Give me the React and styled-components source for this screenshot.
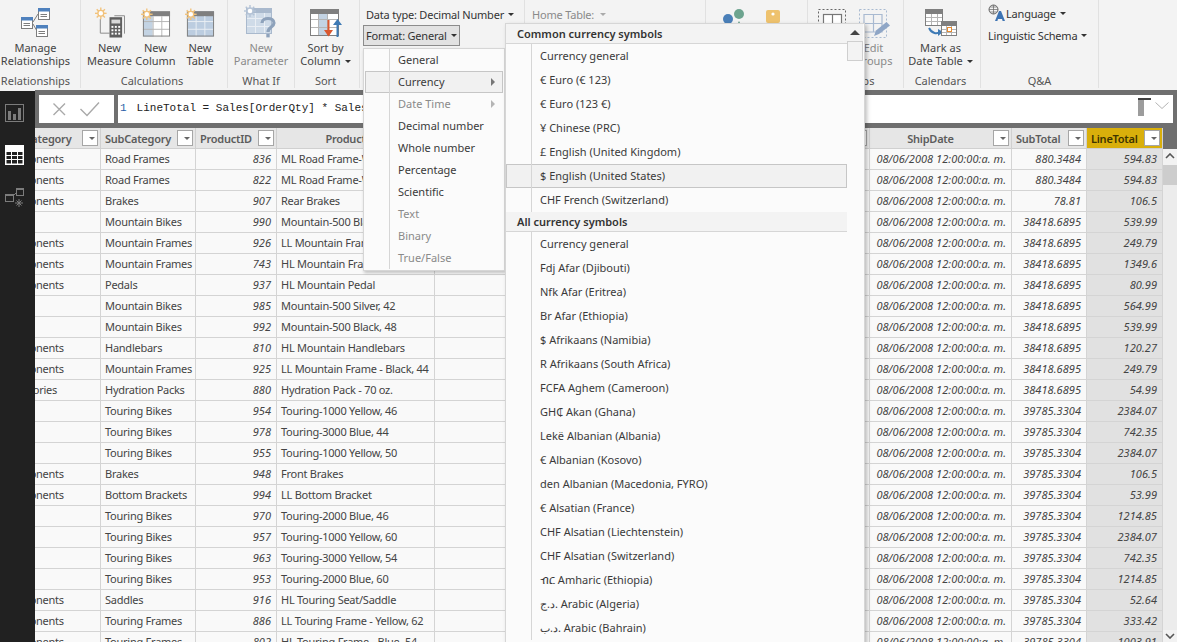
import styled, { createGlobalStyle } from 'styled-components';

const GlobalStyle = createGlobalStyle`
  html, body {
    margin: 0;
    height: 100%;
    overflow: hidden;
    background: #f3f3f3;
    font-family: "Noto Sans", "Open Sans", sans-serif;
    font-size: 11px;
    color: #333;
  }
  * { box-sizing: border-box; }
`;

const rows = [
  ['Components', 'Road Frames', 836, 'ML Road Frame-W Yellow, 48', '880.3484', '594.83'],
  ['Components', 'Road Frames', 822, 'ML Road Frame-W Yellow, 38', '880.3484', '594.83'],
  ['Components', 'Brakes', 907, 'Rear Brakes', '78.81', '106.5'],
  ['Bikes', 'Mountain Bikes', 990, 'Mountain-500 Black, 42', '38418.6895', '539.99'],
  ['Components', 'Mountain Frames', 926, 'LL Mountain Frame - Black, 42', '38418.6895', '249.79'],
  ['Components', 'Mountain Frames', 743, 'HL Mountain Frame - Black, 42', '38418.6895', '1349.6'],
  ['Components', 'Pedals', 937, 'HL Mountain Pedal', '38418.6895', '80.99'],
  ['Bikes', 'Mountain Bikes', 985, 'Mountain-500 Silver, 42', '38418.6895', '564.99'],
  ['Bikes', 'Mountain Bikes', 992, 'Mountain-500 Black, 48', '38418.6895', '539.99'],
  ['Components', 'Handlebars', 810, 'HL Mountain Handlebars', '38418.6895', '120.27'],
  ['Components', 'Mountain Frames', 925, 'LL Mountain Frame - Black, 44', '38418.6895', '249.79'],
  ['Accessories', 'Hydration Packs', 880, 'Hydration Pack - 70 oz.', '38418.6895', '54.99'],
  ['Bikes', 'Touring Bikes', 954, 'Touring-1000 Yellow, 46', '39785.3304', '2384.07'],
  ['Bikes', 'Touring Bikes', 978, 'Touring-3000 Blue, 44', '39785.3304', '742.35'],
  ['Bikes', 'Touring Bikes', 955, 'Touring-1000 Yellow, 50', '39785.3304', '2384.07'],
  ['Components', 'Brakes', 948, 'Front Brakes', '39785.3304', '106.5'],
  ['Components', 'Bottom Brackets', 994, 'LL Bottom Bracket', '39785.3304', '53.99'],
  ['Bikes', 'Touring Bikes', 970, 'Touring-2000 Blue, 46', '39785.3304', '1214.85'],
  ['Bikes', 'Touring Bikes', 957, 'Touring-1000 Yellow, 60', '39785.3304', '2384.07'],
  ['Bikes', 'Touring Bikes', 963, 'Touring-3000 Yellow, 54', '39785.3304', '742.35'],
  ['Bikes', 'Touring Bikes', 953, 'Touring-2000 Blue, 60', '39785.3304', '1214.85'],
  ['Components', 'Saddles', 916, 'HL Touring Seat/Saddle', '39785.3304', '52.64'],
  ['Components', 'Touring Frames', 886, 'LL Touring Frame - Yellow, 62', '39785.3304', '333.42'],
  ['Components', 'Touring Frames', 802, 'HL Touring Frame - Blue, 54', '39785.3304', '1003.91'],
];

const formatItems = [
  { label: 'General' },
  { label: 'Currency', active: true, more: true },
  { label: 'Date Time', off: true, more: true },
  { label: 'Decimal number' },
  { label: 'Whole number' },
  { label: 'Percentage' },
  { label: 'Scientific' },
  { label: 'Text', off: true },
  { label: 'Binary', off: true },
  { label: 'True/False', off: true },
];

const commonCurrency = [
  'Currency general',
  '€ Euro (€ 123)',
  '€ Euro (123 €)',
  '¥ Chinese (PRC)',
  '£ English (United Kingdom)',
  '$ English (United States)',
  'CHF French (Switzerland)',
];

const allCurrency = [
  'Currency general',
  'Fdj Afar (Djibouti)',
  'Nfk Afar (Eritrea)',
  'Br Afar (Ethiopia)',
  '$ Afrikaans (Namibia)',
  'R Afrikaans (South Africa)',
  'FCFA Aghem (Cameroon)',
  'GH₵ Akan (Ghana)',
  'Lekë Albanian (Albania)',
  '€ Albanian (Kosovo)',
  'den Albanian (Macedonia, FYRO)',
  '€ Alsatian (France)',
  'CHF Alsatian (Liechtenstein)',
  'CHF Alsatian (Switzerland)',
  'ብር Amharic (Ethiopia)',
  'د.ج. Arabic (Algeria)',
  'د.ب. Arabic (Bahrain)',
];

// column widths, first one starts behind the left nav
const columns = '105px 95px 81px 158px 220px 215px 142px 75px 76px';

const Page = styled.div`
  position: relative;
  width: 1177px;
  height: 642px;
  overflow: hidden;
`;

const Ribbon = styled.div`
  display: flex;
  height: 90px;
  background: #f3f3f3;
`;

const Group = styled.div`
  display: flex;
  flex-direction: column;
  flex: none;
  width: ${(p) => p.$w}px;
  height: 88px;
  border-right: 1px solid #e1e1e1;
`;

const GroupBody = styled.div`
  display: flex;
  flex: 1;
  justify-content: center;
  padding-right: ${(p) => p.$pr || 0}px;
  padding-top: 4px;
`;

const GroupLabel = styled.div`
  height: 14px;
  line-height: 13px;
  text-align: center;
  color: #555;
  padding-right: ${(p) => p.$pr || 0}px;
`;

const Button = styled.div`
  display: flex;
  flex-direction: column;
  align-items: center;
  flex: none;
  width: ${(p) => p.$w}px;
  line-height: 13px;
  text-align: center;
  color: ${(p) => (p.$off ? '#8a8a8a' : '#444')};
  white-space: nowrap;
`;

const IconSlot = styled.div`
  display: flex;
  align-items: center;
  justify-content: center;
  height: 37px;
`;

const Caret = styled.span`
  display: inline-block;
  width: 0;
  height: 0;
  margin-left: ${(p) => p.$ml || 4}px;
  vertical-align: 2px;
  border-left: 3px solid transparent;
  border-right: 3px solid transparent;
  border-top: 3px solid ${(p) => p.$color || '#333'};
`;

const Stack = styled.div`
  display: flex;
  flex-direction: column;
  flex: 1;
  padding: 0 0 0 ${(p) => p.$pl || 0}px;
`;

const InlineRow = styled.div`
  display: flex;
  align-items: center;
  height: 22px;
  padding-left: ${(p) => p.$pl || 0}px;
  margin-top: ${(p) => p.$mt || 0}px;
  color: ${(p) => (p.$off ? '#8a8a8a' : '#333')};
  letter-spacing: -0.2px;
  white-space: nowrap;
`;

const FormatButton = styled.div`
  display: flex;
  align-items: center;
  width: 97px;
  height: 21px;
  margin-left: 3px;
  padding-left: 2px;
  background: #e2e2e2;
  border: 1px solid #8c8c8c;
  letter-spacing: -0.2px;
  white-space: nowrap;
`;

const Main = styled.div`
  display: flex;
  height: 552px;
`;

const Nav = styled.div`
  display: flex;
  flex-direction: column;
  align-items: flex-start;
  flex: none;
  width: 35px;
  margin-top: 1px;
  padding: 13px 0 0 5px;
  gap: 23px;
  background: #212121;
`;

const Content = styled.div`
  display: flex;
  flex-direction: column;
  flex: 1;
  min-width: 0;
  background: #6f6f6f;
`;

const FormulaStrip = styled.div`
  display: flex;
  flex: none;
  gap: 4px;
  height: 38px;
  padding: 5px 4px 5px 4px;
`;

const FormulaActions = styled.div`
  display: flex;
  align-items: center;
  justify-content: center;
  flex: none;
  width: 75px;
  background: #fff;
`;

const FormulaBox = styled.div`
  display: flex;
  align-items: center;
  flex: 1;
  padding: 0 2px 2px 2px;
  background: #fff;
  font-family: "Liberation Mono", monospace;
  font-size: 11px;
  color: #222;
  white-space: pre;
`;

const LineNo = styled.span`
  color: #2b5fa8;
`;

const FormulaText = styled.span`
  flex: 1;
  margin-left: 10px;
`;

const TableArea = styled.div`
  display: flex;
  flex: 1;
  min-height: 0;
`;

const TableClip = styled.div`
  flex: none;
  width: 1128px;
  overflow: hidden;
`;

const Grid = styled.div`
  width: 1167px;
  margin-left: -39px;
  background: #f9f9f9;
`;

const HeadRow = styled.div`
  display: grid;
  grid-template-columns: ${columns};
  height: 21px;
`;

const HeadCell = styled.div`
  display: flex;
  align-items: center;
  padding: 0 2px 0 4px;
  background: ${(p) => (p.$hot ? '#d9af0b' : '#e6e6e6')};
  border-right: 1px solid #d0d0d0;
  border-bottom: 1px solid #d0d0d0;
  color: ${(p) => (p.$hot ? '#3d3300' : '#5c5c5c')};
  font-weight: 600;
  letter-spacing: -0.25px;
  white-space: nowrap;
`;

const HeadLabel = styled.span`
  flex: 1;
  text-align: ${(p) => (p.$center ? 'center' : 'left')};
  padding-left: ${(p) => p.$pl || 0}px;
  padding-right: ${(p) => (p.$center ? 6 : 0)}px;
`;

const FilterButton = styled.span`
  display: flex;
  align-items: center;
  justify-content: center;
  flex: none;
  width: 16px;
  height: 16px;
  background: #fff;
  border: 1px solid #a6a6a6;
`;

const BodyRow = styled.div`
  display: grid;
  grid-template-columns: ${columns};
  height: 21px;
`;

const Cell = styled.div`
  padding: 0 5px 0 4px;
  line-height: 20px;
  overflow: hidden;
  white-space: nowrap;
  background: ${(p) => (p.$hot ? '#e1e1e1' : '#f9f9f9')};
  border-right: 1px solid #d4d4d4;
  border-bottom: 1px solid #d4d4d4;
  text-align: ${(p) => (p.$num ? 'right' : 'left')};
  font-style: ${(p) => (p.$num ? 'italic' : 'normal')};
  letter-spacing: ${(p) => (p.$num ? '0.05px' : '-0.25px')};
  color: #444;
`;

const ScrollTrack = styled.div`
  display: flex;
  flex-direction: column;
  align-items: center;
  flex: 1;
  margin-top: 21px;
  background: #ececec;
`;

const ScrollArrow = styled.div`
  display: flex;
  align-items: ${(p) => (p.$down ? 'center' : 'flex-start')};
  justify-content: center;
  flex: none;
  width: 100%;
  height: ${(p) => p.$h}px;
  padding-top: ${(p) => (p.$down ? 0 : 4)}px;
  background: #f2f2f2;
`;

const ScrollThumb = styled.div`
  flex: none;
  width: 100%;
  height: 20px;
  background: #cdcdcd;
`;

const ScrollRest = styled.div`
  flex: 1;
`;

// the two open dropdowns lie over the ribbon and the table
const FormatMenu = styled.div`
  position: absolute;
  left: 363px;
  top: 48px;
  width: 142px;
  height: 223px;
  padding: 0 1px;
  background: #fbfbfb;
  border: 1px solid #d6d6d6;
  box-shadow: 1px 2px 3px rgba(0, 0, 0, 0.22);
`;

const CurrencyMenu = styled.div`
  position: absolute;
  left: 505px;
  top: 23px;
  display: flex;
  width: 360px;
  height: 640px;
  background: #fbfbfb;
  border: 1px solid #d6d6d6;
  box-shadow: 2px 2px 4px rgba(0, 0, 0, 0.25);
`;

const CurrencyList = styled.div`
  flex: 1;
  min-width: 0;
`;

const MenuHead = styled.div`
  height: 20px;
  line-height: 19px;
  padding-left: 11px;
  background: #f3f3f3;
  border-bottom: 1px solid #d6d6d6;
  font-weight: 600;
  color: #333;
`;

const MenuRow = styled.div`
  display: flex;
  height: ${(p) => p.$h}px;
  background: ${(p) => (p.$active ? '#f1f1f1' : 'transparent')};
  box-shadow: ${(p) => (p.$active ? 'inset 0 0 0 1px #c6c6c6' : 'none')};
  color: ${(p) => (p.$off ? '#8a8a8a' : '#3a3a3a')};
`;

const MenuGutter = styled.div`
  flex: none;
  width: ${(p) => p.$w}px;
  border-right: 1px solid #d6d6d6;
`;

const MenuLabel = styled.div`
  flex: 1;
  line-height: ${(p) => p.$h}px;
  padding-left: 8px;
  white-space: nowrap;
`;

const MenuArrow = styled.div`
  align-self: center;
  width: 0;
  height: 0;
  margin-right: 8px;
  border-top: 4px solid transparent;
  border-bottom: 4px solid transparent;
  border-left: 4px solid ${(p) => (p.$off ? '#b5b5b5' : '#777')};
`;

const MenuScroll = styled.div`
  display: flex;
  flex-direction: column;
  flex: none;
  width: 16px;
  margin-right: 1px;
`;

const MenuScrollTop = styled.div`
  display: flex;
  align-items: center;
  justify-content: center;
  height: 17px;
  background: #f3f3f3;
`;

const MenuThumb = styled.div`
  height: 20px;
  background: #f3f3f3;
  border: 1px solid #cfcfcf;
`;

function Sun({ x, y, color = '#f2c27a' }) {
  const rays = [0, 45, 90, 135];
  return (
    <g stroke={color} strokeWidth="1.4">
      {rays.map((a) => (
        <line key={a} x1={x - 6} y1={y} x2={x + 6} y2={y} transform={`rotate(${a} ${x} ${y})`} />
      ))}
      <circle cx={x} cy={y} r="3" fill="#fff" />
    </g>
  );
}

function MiniTable({ x, y, w, h }) {
  return (
    <g>
      <rect x={x + 0.5} y={y + 0.5} width={w} height={h} fill="#fff" stroke="#7d7d7d" />
      <rect x={x} y={y} width={w + 1} height={3.5} fill="#4f81bd" />
      <line x1={x + 2.5} y1={y + 6.5} x2={x + w - 2} y2={y + 6.5} stroke="#7d7d7d" />
      <line x1={x + 2.5} y1={y + 8.5} x2={x + w - 2} y2={y + 8.5} stroke="#7d7d7d" />
    </g>
  );
}

function RelationshipsIcon() {
  return (
    <svg width="30" height="31" viewBox="22 6 30 31">
      <path d="M34 21 L39 13 M34 23 L38 30" stroke="#7d7d7d" fill="none" />
      <MiniTable x={39} y={7} w={11} h={11} />
      <MiniTable x={22} y={16} w={11} h={11} />
      <MiniTable x={37} y={24} w={11} h={11} />
    </svg>
  );
}

function MeasureIcon() {
  const keys = [25, 28.5, 32];
  return (
    <svg width="30" height="32" viewBox="92 6 31 32">
      <path d="M112 14.5 H122.5 V33 M97.5 18 V32.5 H107" stroke="#8a8a8a" fill="none" />
      <rect x="107" y="16" width="13" height="21" fill="#5f5f5f" />
      <rect x="109" y="18.5" width="9" height="4" fill="#d9d9d9" />
      {keys.map((ky) =>
        [109, 112.5, 116].map((kx) => (
          <rect key={`${kx}-${ky}`} x={kx} y={ky} width="2" height="2" fill="#fff" />
        )),
      )}
      <Sun x={98} y={12} />
    </svg>
  );
}

function TableGlyph({ x, y, w, h, cols, rowsAt, fill, blueCol, head = '#7f7f7f', line = '#b5b5b5' }) {
  return (
    <g>
      <rect x={x} y={y} width={w} height={h} fill={fill} />
      {blueCol && <rect x={blueCol[0]} y={y} width={blueCol[1]} height={h} fill="#c3d3e3" />}
      <rect x={x} y={y} width={w} height={5} fill={head} />
      {cols.map((c) => (
        <line key={c} x1={c} y1={y + 5} x2={c} y2={y + h} stroke={line} />
      ))}
      {rowsAt.map((r) => (
        <line key={r} x1={x} y1={r} x2={x + w} y2={r} stroke={line} />
      ))}
      <rect x={x + 0.5} y={y + 0.5} width={w - 1} height={h - 1} fill="none" stroke={head} />
    </g>
  );
}

function ColumnIcon() {
  return (
    <svg width="30" height="30" viewBox="140 6 31 30">
      <TableGlyph x={142} y={9} w={28} h={26} cols={[152.5, 161.5]} rowsAt={[19.5, 27.5]} fill="#fff" blueCol={[142, 10]} />
      <Sun x={146} y={12} />
    </svg>
  );
}

function NewTableIcon() {
  return (
    <svg width="30" height="30" viewBox="184 6 31 30">
      <TableGlyph x={186} y={9} w={28} h={26} cols={[195.5, 204.5]} rowsAt={[19.5, 27.5]} fill="#bccde0" line="#e9eef4" />
      <Sun x={190} y={12} />
    </svg>
  );
}

function ParameterIcon() {
  return (
    <svg width="34" height="36" viewBox="243 6 34 36">
      <TableGlyph x={245} y={9} w={26} h={26} cols={[254.5, 263.5]} rowsAt={[19.5, 27.5]} fill="#cfdbe8" head="#a9b9cd" line="#e9eef4" />
      <Sun x={249} y={12} color="#b4c3d6" />
      <path d="M261 24 C261 18 273 18 273 24 C273 28 267 28 267 33" stroke="#8ea2bb" strokeWidth="3.2" fill="none" />
      <rect x="265.3" y="35" width="3.4" height="3.4" fill="#8ea2bb" />
    </svg>
  );
}

function SortIcon() {
  return (
    <svg width="34" height="30" viewBox="309 9 34 30">
      <TableGlyph x={310} y={10} w={29} h={27} cols={[318.5, 327.5]} rowsAt={[20.5, 28.5]} fill="#fff" blueCol={[318, 9]} />
      <path d="M328.5 21 V36" stroke="#d9572f" strokeWidth="2" />
      <path d="M324 31 L328.5 37.5 L333 31 Z" fill="#d9572f" />
      <path d="M337.5 38 V24" stroke="#3e7ab5" strokeWidth="2" />
      <path d="M333 26 L337.5 20 L342 26 Z" fill="#3e7ab5" />
    </svg>
  );
}

function RolesIcon() {
  return (
    <svg width="34" height="30" viewBox="719 6 34 30">
      <circle cx="737" cy="12" r="5" fill="#6da48f" />
      <path d="M730 32 L737 19 L744 32 Z" fill="#6da48f" />
      <circle cx="726" cy="17" r="5" fill="#4a7fb8" />
      <path d="M720 34 L726 24 L732 34 Z" fill="#4a7fb8" />
    </svg>
  );
}

function KeyIcon() {
  return (
    <svg width="22" height="30" viewBox="768 6 22 30">
      <rect x="770" y="8" width="14" height="13" rx="2" fill="#eec26e" />
      <circle cx="777" cy="12" r="1.6" fill="#fff" />
      <rect x="774" y="20" width="4" height="12" fill="#eec26e" />
      <circle cx="784" cy="26" r="5" fill="#7a7a7a" />
    </svg>
  );
}

function NewGroupIcon() {
  return (
    <svg width="30" height="30" viewBox="817 6 30 30">
      <rect x="818.5" y="7.5" width="27" height="27" fill="none" stroke="#666" strokeDasharray="2 2" />
      <rect x="823.5" y="12.5" width="18" height="10" fill="#fff" stroke="#777" strokeWidth="1.2" />
      <line x1="832.5" y1="12" x2="832.5" y2="23" stroke="#777" strokeWidth="1.2" />
    </svg>
  );
}

function EditGroupIcon() {
  return (
    <svg width="32" height="30" viewBox="859 6 32 30">
      <rect x="860.5" y="7.5" width="27" height="28" fill="none" stroke="#a9bad1" strokeDasharray="2 2" />
      <path d="M865 12.5 H883 V30 H865 Z M874.5 12.5 V30 M865 21.5 H883" fill="none" stroke="#a9bad1" strokeWidth="1.2" />
      <path d="M875 34 L877 28.5 L887.5 20 L891 23.5 L880 32 Z" fill="#8fa6c6" />
    </svg>
  );
}

function DateTableIcon() {
  return (
    <svg width="34" height="30" viewBox="924 7 34 30">
      <TableGlyph x={925} y={8} w={18} h={17} cols={[931.5, 937.5]} rowsAt={[16.5, 20.5]} fill="#fff" />
      <path d="M929 27 C932 33 937 33 940 31" stroke="#3e7ab5" strokeWidth="2" fill="none" />
      <path d="M938 28 L943 31 L938 35 Z" fill="#3e7ab5" />
      <TableGlyph x={941} y={20} w={16} h={15} cols={[946.5, 951.5]} rowsAt={[28.5, 31.5]} fill="#fff" />
      <rect x="947.5" y="26.5" width="4" height="4" fill="#fff" stroke="#e58a2f" />
    </svg>
  );
}

function LanguageIcon() {
  return (
    <svg width="18" height="18" viewBox="988 5 18 18">
      <circle cx="993.5" cy="10.5" r="4.5" fill="none" stroke="#666" />
      <path d="M989 10.5 H998 M993.5 6 V15 M990 8 H997 M990 13 H997" stroke="#666" strokeWidth="0.7" />
      <path d="M995 22 L999 12 H1001 L1005 22 H1002.6 L1002 20 H998 L997.4 22 Z" fill="#3e74b3" />
    </svg>
  );
}

function CrossCheck() {
  return (
    <svg width="75" height="28" viewBox="39 95 75 28">
      <path d="M53.5 103.5 L65 115 M65 103.5 L53.5 115" stroke="#a9a9a9" strokeWidth="1.4" fill="none" />
      <path d="M80.5 109 L87 115.5 L99 102.5" stroke="#a9a9a9" strokeWidth="1.4" fill="none" />
    </svg>
  );
}

function FormulaTools() {
  return (
    <svg width="33" height="27" viewBox="1139 95 33 27">
      <rect x="1139" y="98" width="13" height="2" fill="#404040" />
      <rect x="1139" y="100" width="6" height="16" fill="#9c9c9c" />
      <path d="M1156.5 102.5 L1163 108.5 L1169.5 102.5" stroke="#b4b4b4" fill="none" />
    </svg>
  );
}

function ReportNavIcon() {
  return (
    <svg width="19" height="18" viewBox="5 104 19 18">
      <rect x="5.5" y="104.5" width="18" height="17" fill="none" stroke="#7c7c7c" />
      <path d="M8 120 V111 H11 V120 Z M13 120 V114 H16 V120 Z M18 120 V108 H21 V120 Z" fill="#7c7c7c" />
    </svg>
  );
}

function TableNavIcon() {
  return (
    <svg width="19" height="20" viewBox="5 145 19 20">
      <rect x="5" y="145" width="19" height="20" fill="#fff" />
      <path d="M6 151.5 H23 V164 H6 Z M6 155.5 H23 M6 159.5 H23 M11.5 151.5 V164 M17.5 151.5 V164" fill="#212121" stroke="#fff" />
    </svg>
  );
}

function ModelNavIcon() {
  return (
    <svg width="20" height="20" viewBox="5 188 20 20">
      <rect x="5.5" y="194.5" width="8" height="7" fill="none" stroke="#7c7c7c" />
      <rect x="16.5" y="188.5" width="7" height="7" fill="none" stroke="#7c7c7c" />
      <rect x="5" y="194" width="9" height="2" fill="#7c7c7c" />
      <rect x="16" y="188" width="8" height="2" fill="#7c7c7c" />
      <path d="M13 196 L17 192 M19 199 L19 207 M15 203 H23 M16.5 200.5 L21.5 205.5 M21.5 200.5 L16.5 205.5" stroke="#7c7c7c" strokeWidth="1" fill="none" />
    </svg>
  );
}

function TriangleUp({ color = '#444', size = 5 }) {
  return (
    <svg width={size * 2} height={size} viewBox="0 0 10 5">
      <path d="M0 5 L5 0 L10 5 Z" fill={color} />
    </svg>
  );
}

function ChevronBar({ down }) {
  return (
    <svg width="10" height="6" viewBox="0 0 10 6">
      <path d={down ? 'M1 1 L5 5 L9 1' : 'M1 5 L5 1 L9 5'} stroke="#555" strokeWidth="1.6" fill="none" />
    </svg>
  );
}

function Filter() {
  return (
    <FilterButton>
      <Caret $ml={0} $color="#666" />
    </FilterButton>
  );
}

function Header({ children, center, pl, hot }) {
  return (
    <HeadCell $hot={hot}>
      <HeadLabel $center={center} $pl={pl}>{children}</HeadLabel>
      <Filter />
    </HeadCell>
  );
}

function CurrencyRow({ label }) {
  return (
    <MenuRow $h={24} $active={label.startsWith('$ English')}>
      <MenuGutter $w={26} />
      <MenuLabel $h={24}>{label}</MenuLabel>
    </MenuRow>
  );
}

export default function App() {
  return (
    <Page>
      <GlobalStyle />
      <Ribbon>
        <Group $w={81}>
          <GroupBody $pr={9}>
            <Button $w={72}>
              <IconSlot><RelationshipsIcon /></IconSlot>
              Manage
              <br />
              Relationships
            </Button>
          </GroupBody>
          <GroupLabel $pr={9}>Relationships</GroupLabel>
        </Group>
        <Group $w={147}>
          <GroupBody>
            <Button $w={47}>
              <IconSlot><MeasureIcon /></IconSlot>
              New
              <br />
              Measure
            </Button>
            <Button $w={45}>
              <IconSlot><ColumnIcon /></IconSlot>
              New
              <br />
              Column
            </Button>
            <Button $w={44}>
              <IconSlot><NewTableIcon /></IconSlot>
              New
              <br />
              Table
            </Button>
          </GroupBody>
          <GroupLabel $pr={4}>Calculations</GroupLabel>
        </Group>
        <Group $w={67}>
          <GroupBody>
            <Button $w={60} $off>
              <IconSlot><ParameterIcon /></IconSlot>
              New
              <br />
              Parameter
            </Button>
          </GroupBody>
          <GroupLabel>What If</GroupLabel>
        </Group>
        <Group $w={65}>
          <GroupBody $pr={3}>
            <Button $w={60}>
              <IconSlot><SortIcon /></IconSlot>
              Sort by
              <br />
              <span>Column<Caret /></span>
            </Button>
          </GroupBody>
          <GroupLabel $pr={3}>Sort</GroupLabel>
        </Group>
        <Group $w={165}>
          <Stack>
            <InlineRow $pl={6} $mt={3}>Data type: Decimal Number<Caret /></InlineRow>
            <FormatButton>Format: General<Caret /></FormatButton>
          </Stack>
          <GroupLabel>Formatting</GroupLabel>
        </Group>
        <Group $w={181}>
          <Stack>
            <InlineRow $pl={7} $mt={3} $off>Home Table:<Caret $ml={6} $color="#aaa" /></InlineRow>
          </Stack>
          <GroupLabel>Properties</GroupLabel>
        </Group>
        <Group $w={102}>
          <GroupBody $pr={27}>
            <Button $w={64}>
              <IconSlot><RolesIcon /></IconSlot>
              Manage
              <br />
              Roles
            </Button>
            <Button $w={10}>
              <IconSlot><KeyIcon /></IconSlot>
              View
              <br />
              As
            </Button>
          </GroupBody>
          <GroupLabel>Security</GroupLabel>
        </Group>
        <Group $w={96}>
          <GroupBody $pr={8}>
            <Button $w={44}>
              <IconSlot><NewGroupIcon /></IconSlot>
              New
              <br />
              Group
            </Button>
            <Button $w={40} $off>
              <IconSlot><EditGroupIcon /></IconSlot>
              Edit
              <br />
              Groups
            </Button>
          </GroupBody>
          <GroupLabel>Groups</GroupLabel>
        </Group>
        <Group $w={77}>
          <GroupBody $pr={3}>
            <Button $w={70}>
              <IconSlot><DateTableIcon /></IconSlot>
              Mark as
              <br />
              <span>Date Table<Caret /></span>
            </Button>
          </GroupBody>
          <GroupLabel $pr={3}>Calendars</GroupLabel>
        </Group>
        <Group $w={118}>
          <Stack $pl={7}>
            <InlineRow $mt={2}><LanguageIcon />Language<Caret /></InlineRow>
            <InlineRow>Linguistic Schema<Caret /></InlineRow>
          </Stack>
          <GroupLabel $pr={0}>Q&amp;A</GroupLabel>
        </Group>
      </Ribbon>
      <Main>
        <Nav>
          <ReportNavIcon />
          <TableNavIcon />
          <ModelNavIcon />
        </Nav>
        <Content>
          <FormulaStrip>
            <FormulaActions><CrossCheck /></FormulaActions>
            <FormulaBox>
              <LineNo>1</LineNo>
              <FormulaText>LineTotal = Sales[OrderQty] * Sales[UnitPrice]</FormulaText>
              <FormulaTools />
            </FormulaBox>
          </FormulaStrip>
          <TableArea>
            <TableClip>
              <Grid>
                <HeadRow>
                  <Header center pl={20}>Category</Header>
                  <Header>SubCategory</Header>
                  <Header>ProductID</Header>
                  <Header center>Product</Header>
                  <Header center>OrderDate</Header>
                  <Header center>DueDate</Header>
                  <Header center>ShipDate</Header>
                  <Header>SubTotal</Header>
                  <Header hot>LineTotal</Header>
                </HeadRow>
                {rows.map((r, i) => (
                  <BodyRow key={i}>
                    <Cell>{r[0]}</Cell>
                    <Cell>{r[1]}</Cell>
                    <Cell $num>{r[2]}</Cell>
                    <Cell>{r[3]}</Cell>
                    <Cell />
                    <Cell />
                    <Cell $num>08/06/2008 12:00:00:a. m.</Cell>
                    <Cell $num>{r[4]}</Cell>
                    <Cell $num $hot>{r[5]}</Cell>
                  </BodyRow>
                ))}
              </Grid>
            </TableClip>
            <ScrollTrack>
              <ScrollArrow $h={16}><ChevronBar /></ScrollArrow>
              <ScrollThumb />
              <ScrollRest />
              <ScrollArrow $h={12} $down><ChevronBar down /></ScrollArrow>
            </ScrollTrack>
          </TableArea>
        </Content>
      </Main>
      <FormatMenu>
        {formatItems.map((item) => (
          <MenuRow key={item.label} $h={22} $active={item.active} $off={item.off}>
            <MenuGutter $w={25} />
            <MenuLabel $h={22}>{item.label}</MenuLabel>
            {item.more && <MenuArrow $off={item.off} />}
          </MenuRow>
        ))}
      </FormatMenu>
      <CurrencyMenu>
        <CurrencyList>
          <MenuHead>Common currency symbols</MenuHead>
          {commonCurrency.map((label) => (
            <CurrencyRow key={label} label={label} />
          ))}
          <MenuHead>All currency symbols</MenuHead>
          {allCurrency.map((label) => (
            <CurrencyRow key={label} label={label} />
          ))}
        </CurrencyList>
        <MenuScroll>
          <MenuScrollTop><TriangleUp /></MenuScrollTop>
          <MenuThumb />
        </MenuScroll>
      </CurrencyMenu>
    </Page>
  );
}
